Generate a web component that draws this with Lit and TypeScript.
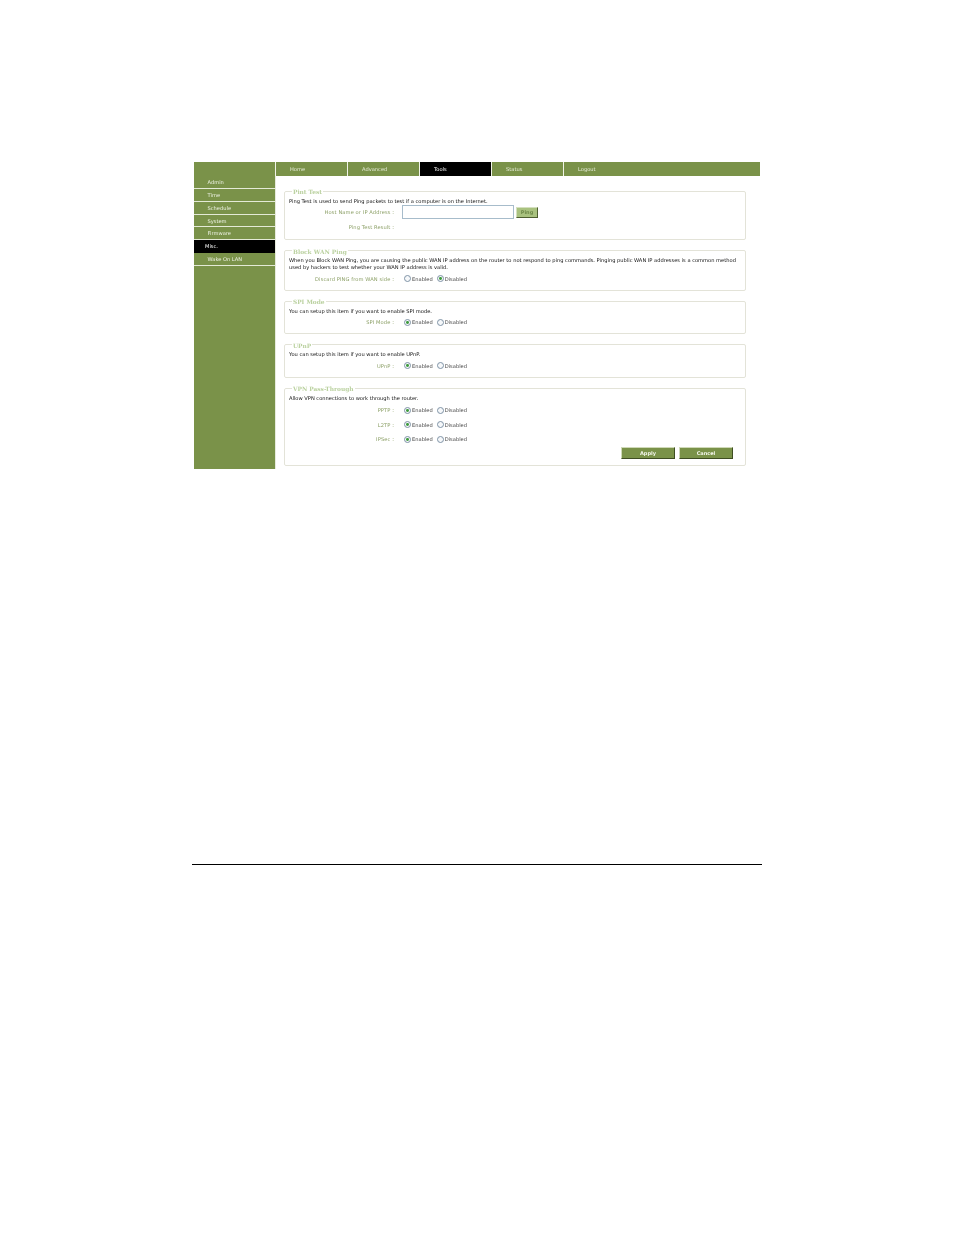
import { LitElement, html, css } from "lit";
import { customElement } from "lit/decorators.js";

const side = ["Admin", "Time", "Schedule", "System", "Firmware", "Misc.", "Wake On LAN"];
const nav = ["Home", "Advanced", "Tools", "Status", "Logout"];

@customElement("app-root")
export class AppRoot extends LitElement {
  static styles = css`
    :host { display: block; width: 954px; height: 1235px; background: #fff; box-sizing: border-box; padding: 162px 0 0 194px; font-family: "DejaVu Sans", sans-serif; font-size: 5.14px; color: #222; overflow: hidden; }
    .app { width: 566px; display: grid; grid-template-columns: 81px 1fr; grid-template-rows: 14px 293px; background: #fff; filter: blur(0.3px); }
    .corner, .side { background: #7a9249; }
    .corner { grid-column: 1; grid-row: 1; }
    .nav { grid-column: 2; grid-row: 1; background: #7a9249; display: flex; }
    .nav a { width: 72px; box-sizing: border-box; border-left: 1px solid #f1f4e8; padding-left: 14px; line-height: 14px; color: #e6ecd8; }
    .nav a.on { background: #000; color: #fff; }
    .side { grid-column: 1; grid-row: 2; padding-top: 0; }
    .side a { display: block; height: 12.85px; line-height: 12.4px; box-sizing: border-box; padding-left: 13.5px; color: #eef2e4; border-bottom: 1px solid #e4ead6; }
    .side a.on { background: #000; color: #fff; padding-left: 11px; border-bottom: 0; }
    .main { grid-column: 2; grid-row: 2; border-left: 1px solid #e7ebdd; padding: 11px 14px 0 8px; display: flex; flex-direction: column; gap: 6.25px; }
    fieldset { margin: 0; padding: 0 4px; border: 1px solid #e3e3d8; border-radius: 2px; min-width: 0; }
    legend { margin-left: 3px; padding: 2px 1px 0; line-height: 6px; font-family: "DejaVu Serif", serif; font-weight: 700; font-size: 5.85px; color: #bad19f; }
    .desc { padding-top: 2.8px; line-height: 7px; color: #111; }
    .vpn .desc { padding-bottom: 1px; }
    .row { display: grid; grid-template-columns: 105px 1fr; column-gap: 8px; align-items: center; height: 14.5px; }
    .lab { text-align: right; color: #8a9e64; letter-spacing: 0.1px; }
    .opts { display: flex; align-items: center; }
    .opt { display: flex; align-items: center; margin: 0 2px 0 2px; color: #444; }
    .radio { width: 7px; height: 7px; box-sizing: border-box; border: 0.7px solid #7f93a6; border-radius: 50%; background: #f6f8fa; margin-right: 1px; display: flex; align-items: center; justify-content: center; }
    .radio.on::after { content: ""; width: 2.8px; height: 2.8px; border-radius: 50%; background: #3c9a3c; }
    .input { width: 112px; height: 14px; box-sizing: border-box; border: 1px solid #a7bccb; background: #fff; margin-right: 2px; }
    .ping { width: 22px; height: 11px; box-sizing: border-box; border: 1px solid; border-color: #d5e0c0 #4e5f30 #4e5f30 #d5e0c0; background: #a9c27f; color: #6f8a4a; font-weight: 700; text-align: center; line-height: 9px; font-size: 5px; }
    .btns { display: flex; justify-content: flex-end; gap: 4px; padding: 0.5px 8px 6px 0; }
    .btn { width: 54px; height: 12px; box-sizing: border-box; border: 1px solid; border-color: #cfd9b8 #3e4d22 #3e4d22 #cfd9b8; background: #7a9249; color: #f3f6ea; font-weight: 700; font-size: 5px; text-align: center; line-height: 10px; }
    .tail1 { height: 5.5px; } .tail2 { height: 4px; }
    .rule { width: 570px; height: 1px; background: #000; margin: 395px 0 0 -2px; }
  `;

  radios(on: number) {
    return html`<div class="opts">
      <span class="opt"><span class="radio ${on === 0 ? "on" : ""}"></span>Enabled</span>
      <span class="opt"><span class="radio ${on === 1 ? "on" : ""}"></span>Disabled</span>
    </div>`;
  }
  row(label: string, on: number) {
    return html`<div class="row"><span class="lab">${label} :</span>${this.radios(on)}</div>`;
  }

  render() {
    return html`
      <div class="app">
        <div class="corner"></div>
        <div class="nav">${nav.map((n) => html`<a class=${n === "Tools" ? "on" : ""}>${n}</a>`)}</div>
        <div class="side">${side.map((s) => html`<a class=${s === "Misc." ? "on" : ""}>${s}</a>`)}</div>
        <div class="main">
          <fieldset>
            <legend>Pint Test</legend>
            <div class="desc">Ping Test is used to send Ping packets to test if a computer is on the Internet.</div>
            <div class="row"><span class="lab">Host Name or IP Address :</span><div class="opts"><span class="input"></span><span class="ping">Ping</span></div></div>
            <div class="row"><span class="lab">Ping Test Result :</span></div>
            <div class="tail1"></div>
          </fieldset>
          <fieldset>
            <legend>Block WAN Ping</legend>
            <div class="desc">When you Block WAN Ping, you are causing the public WAN IP address on the router to not respond to ping commands. Pinging public WAN IP addresses is a common method used by hackers to test whether your WAN IP address is valid.</div>
            ${this.row("Discard PING from WAN side", 1)}
            <div class="tail2"></div>
          </fieldset>
          <fieldset>
            <legend>SPI Mode</legend>
            <div class="desc">You can setup this item if you want to enable SPI mode.</div>
            ${this.row("SPI Mode", 0)}
            <div class="tail2"></div>
          </fieldset>
          <fieldset>
            <legend>UPnP</legend>
            <div class="desc">You can setup this item if you want to enable UPnP.</div>
            ${this.row("UPnP", 0)}
            <div class="tail2"></div>
          </fieldset>
          <fieldset class="vpn">
            <legend>VPN Pass-Through</legend>
            <div class="desc">Allow VPN connections to work through the router.</div>
            ${this.row("PPTP", 0)}
            ${this.row("L2TP", 0)}
            ${this.row("IPSec", 0)}
            <div class="btns"><span class="btn">Apply</span><span class="btn">Cancel</span></div>
          </fieldset>
        </div>
      </div>
      <div class="rule"></div>
    `;
  }
}
